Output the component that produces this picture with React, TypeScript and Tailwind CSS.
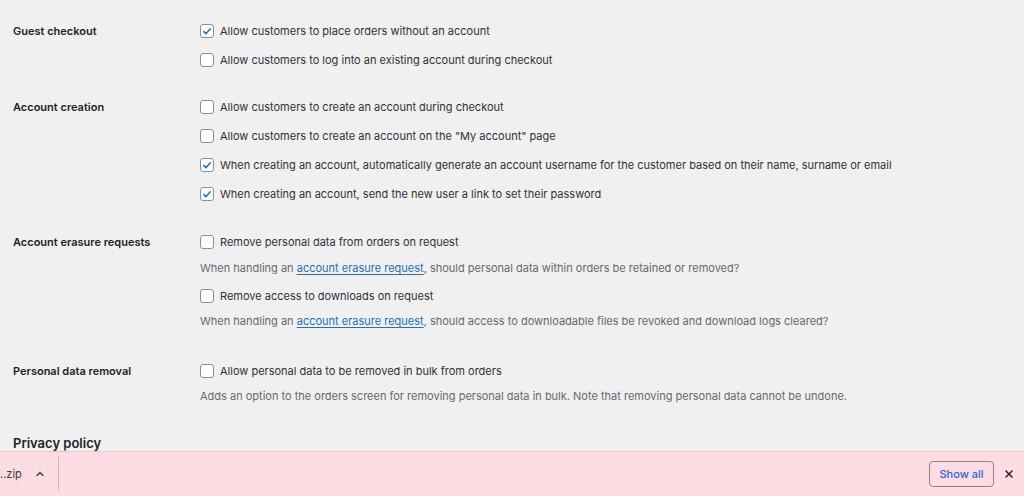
import { ChevronUp, X } from "lucide-react";

type Opt = { text: string; checked?: boolean };

function Checkbox({ checked }: { checked?: boolean }) {
  return (
    <span className="inline-flex h-[14px] w-[14px] shrink-0 items-center justify-center rounded-[3px] border border-[#8c8f94] bg-white">
      {checked && (
        <svg viewBox="0 0 20 20" className="h-[15px] w-[15px]" aria-hidden="true">
          <path
            d="M4.8 10.2l3.4 3.5L15.4 5.4"
            fill="none"
            stroke="#2271b1"
            strokeWidth="2.6"
            strokeLinecap="round"
            strokeLinejoin="round"
          />
        </svg>
      )}
    </span>
  );
}

function ErasureDesc({ tail }: { tail: string }) {
  return (
    <>
      When handling an{" "}
      <span className="text-[#2271b1] underline underline-offset-2">account erasure request</span>, {tail}
    </>
  );
}

function Line({ opt }: { opt: Opt }) {
  return (
    <div className="flex h-5 items-center gap-[6px] text-[#2c3338]">
      <Checkbox checked={opt.checked} />
      <span>{opt.text}</span>
    </div>
  );
}

function Desc({ children, className }: { children: React.ReactNode; className: string }) {
  return <div className={"flex h-5 items-center text-[#646970] " + className}>{children}</div>;
}

export default function App() {
  return (
    <div
      className="flex h-[496px] w-[1024px] flex-col overflow-hidden bg-[#f0f0f1] text-[11px]"
      style={{ fontFamily: "Inter, 'Liberation Sans', sans-serif" }}
    >
      <div className="flex-1 overflow-hidden pl-[13px] pt-[21px]">
        {/* Guest checkout */}
        <div className="grid grid-cols-[187px_1fr]">
          <div className="flex h-5 items-center font-semibold text-[#1d2327]">Guest checkout</div>
          <div className="flex flex-col gap-[9px]">
            <Line opt={{ text: "Allow customers to place orders without an account", checked: true }} />
            <Line opt={{ text: "Allow customers to log into an existing account during checkout" }} />
          </div>
        </div>

        {/* Account creation */}
        <div className="mt-[27px] grid grid-cols-[187px_1fr]">
          <div className="flex h-5 items-center font-semibold text-[#1d2327]">Account creation</div>
          <div className="flex flex-col gap-[9px]">
            <Line opt={{ text: "Allow customers to create an account during checkout" }} />
            <Line opt={{ text: 'Allow customers to create an account on the "My account" page' }} />
            <Line
              opt={{
                text: "When creating an account, automatically generate an account username for the customer based on their name, surname or email",
                checked: true,
              }}
            />
            <Line opt={{ text: "When creating an account, send the new user a link to set their password", checked: true }} />
          </div>
        </div>

        {/* Account erasure requests */}
        <div className="mt-7 grid grid-cols-[187px_1fr]">
          <div className="flex h-5 items-center font-semibold text-[#1d2327]">Account erasure requests</div>
          <div className="flex flex-col">
            <Line opt={{ text: "Remove personal data from orders on request" }} />
            <Desc className="mt-[6px]">
              <span>
                <ErasureDesc tail="should personal data within orders be retained or removed?" />
              </span>
            </Desc>
            <div className="mt-2">
              <Line opt={{ text: "Remove access to downloads on request" }} />
            </div>
            <Desc className="mt-[5px]">
              <span>
                <ErasureDesc tail="should access to downloadable files be revoked and download logs cleared?" />
              </span>
            </Desc>
          </div>
        </div>

        {/* Personal data removal */}
        <div className="mt-[30px] grid grid-cols-[187px_1fr]">
          <div className="flex h-5 items-center font-semibold text-[#1d2327]">Personal data removal</div>
          <div className="flex flex-col">
            <Line opt={{ text: "Allow personal data to be removed in bulk from orders" }} />
            <Desc className="mt-[5px]">
              Adds an option to the orders screen for removing personal data in bulk. Note that removing personal data
              cannot be undone.
            </Desc>
          </div>
        </div>

        <h2 className="mt-[28px] flex h-5 items-center text-[13px] font-semibold text-[#1d2327]">Privacy policy</h2>
      </div>

      {/* Download bar */}
      <div className="flex h-[45px] shrink-0 items-center border-t border-[#e8c3ca] bg-[#fddde3] pr-[9px]">
        <span className="text-[11px] text-[#3c3c3c]">..zip</span>
        <ChevronUp className="ml-3 h-3 w-3 text-[#3c3c3c]" strokeWidth={2.5} />
        <div className="ml-[12px] h-[34px] w-px bg-[#c9b7bb]" />
        <div className="flex-1" />
        <button
          type="button"
          className="h-[26px] w-[65px] rounded-[4px] border border-[#8f8488] text-[11px] font-medium text-[#2f62cf]"
        >
          Show all
        </button>
        <X className="ml-[9px] h-3 w-3 text-[#222]" strokeWidth={3} />
      </div>
    </div>
  );
}
